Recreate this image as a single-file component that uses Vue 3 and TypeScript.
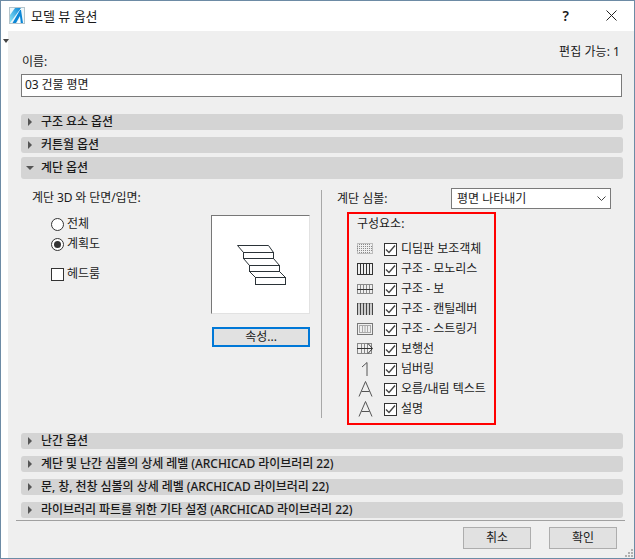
<script setup lang="ts">
const sectionsBottom: string[] = [
  '난간 옵션',
  '계단 및 난간 심볼의 상세 레벨 (ARCHICAD 라이브러리 22)',
  '문, 창, 천창 심볼의 상세 레벨 (ARCHICAD 라이브러리 22)',
  '라이브러리 파트를 위한 기타 설정 (ARCHICAD 라이브러리 22)',
]
const components: { icon: string; label: string }[] = [
  { icon: 'dim', label: '디딤판 보조객체' },
  { icon: 'mono', label: '구조 - 모노리스' },
  { icon: 'beam', label: '구조 - 보' },
  { icon: 'cant', label: '구조 - 캔틸레버' },
  { icon: 'str', label: '구조 - 스트링거' },
  { icon: 'walk', label: '보행선' },
  { icon: 'num', label: '넘버링' },
  { icon: 'a', label: '오름/내림 텍스트' },
  { icon: 'a', label: '설명' },
]
const bars = (n: number, x0: number, dx: number): number[] =>
  Array.from({ length: n }, (_, i) => x0 + i * dx)
</script>

<template>
  <div class="window">
    <header class="titlebar">
      <svg class="logo" width="16" height="18" viewBox="0 0 16 18">
        <defs>
          <linearGradient id="lg" x1="0" y1="1" x2="1" y2="0">
            <stop offset="0" stop-color="#8fe6f6" />
            <stop offset="1" stop-color="#0a86d6" />
          </linearGradient>
        </defs>
        <rect x="0.5" y="0.5" width="15" height="16" fill="#eef7fa" stroke="#b5c5cc" />
        <path d="M1 16 V8 L6 1 H12 Z" fill="url(#lg)" />
        <path d="M3.5 16 L11 3 L12 3 L14 16 H11.5 L11 9 L7 16 Z" fill="#0a86d6" />
        <path d="M8.5 16 L11 10 L11.5 16 Z" fill="#fff" />
      </svg>
      <span class="title">모델 뷰 옵션</span>
      <span class="help">?</span>
      <svg class="close" width="11" height="11" viewBox="0 0 11 11">
        <path d="M0.5 0.5 L10.5 10.5 M10.5 0.5 L0.5 10.5" stroke="#222" fill="none" />
      </svg>
    </header>

    <main class="body">
      <i class="corner-arrow"></i>
      <div class="edit-count">편집 가능: 1</div>
      <label class="name-label">이름:</label>
      <div class="name-input">03 건물 평면</div>

      <div class="section sec-first"><i class="tri-right"></i><span>구조 요소 옵션</span></div>
      <div class="section sec-second"><i class="tri-right"></i><span>커튼월 옵션</span></div>
      <div class="section sec-open"><i class="tri-down"></i><span>계단 옵션</span></div>

      <div class="panel">
        <div class="left">
          <div class="group-label">계단 3D 와 단면/입면:</div>
          <div class="left-row">
            <div class="options">
              <div class="opt"><i class="radio"></i><span>전체</span></div>
              <div class="opt opt-2"><i class="radio on"></i><span>계획도</span></div>
              <div class="opt opt-3"><i class="box"></i><span>헤드룸</span></div>
            </div>
            <div class="preview-col">
              <div class="preview">
                <svg width="97" height="97" viewBox="1 1 97 97">
                  <g fill="none" stroke="#2b3338" stroke-width="1">
                    <path d="M26.5 30.5 H57.5 L62.5 37.5 M26.5 30.5 L32.5 37.5" />
                    <rect x="32.5" y="37.5" width="30" height="6" />
                    <path d="M32.5 43.5 L38.5 50.5 M62.5 43.5 L68.5 50.5" />
                    <rect x="38.5" y="50.5" width="30" height="6" />
                    <path d="M38.5 56.5 L44.5 62.5 M68.5 56.5 L74.5 62.5" />
                    <rect x="44.5" y="62.5" width="30" height="7" />
                  </g>
                </svg>
              </div>
              <button class="attr-btn">속성...</button>
            </div>
          </div>
        </div>

        <div class="vdivider"></div>

        <div class="right">
          <div class="symbol-row">
            <span class="symbol-label">계단 심볼:</span>
            <div class="select">
              <span>평면 나타내기</span>
              <svg width="9" height="5" viewBox="0 0 9 5"><path d="M0.5 0.5 L4.5 4.5 L8.5 0.5" fill="none" stroke="#444" /></svg>
            </div>
          </div>
          <div class="red-box">
            <div class="comp-title">구성요소:</div>
            <div v-for="c in components" :key="c.label" class="comp-row">
              <svg class="comp-icon" width="16" height="16" viewBox="0 0 16 16">
                <g v-if="c.icon === 'dim'" stroke="#8a8a8a" fill="none" stroke-dasharray="1 1">
                  <rect x="0.5" y="2.5" width="15" height="10" />
                  <path v-for="x in bars(6, 2.5, 2)" :key="x" :d="`M${x} 3 V13`" />
                  <path d="M0 5.5 H16 M0 7.5 H16 M0 9.5 H16" />
                </g>
                <g v-else-if="c.icon === 'mono'" stroke="#333" fill="none">
                  <rect x="0.5" y="2.5" width="15" height="11" />
                  <path v-for="x in bars(4, 3.5, 3)" :key="x" :d="`M${x} 2.5 V13.5`" />
                </g>
                <g v-else-if="c.icon === 'beam'" stroke="#8a8a8a" fill="none">
                  <rect x="0.5" y="3.5" width="15" height="9" />
                  <path v-for="x in bars(4, 3.5, 3)" :key="x" :d="`M${x} 3.5 V12.5`" />
                  <path d="M0 8.5 H16" stroke="#333" />
                </g>
                <g v-else-if="c.icon === 'cant'" fill="none">
                  <path d="M0 2.5 H16" stroke="#999" />
                  <path v-for="x in bars(6, 0.5, 3)" :key="x" :d="`M${x} 2 V14`" stroke="#444" />
                  <path d="M2 3 V14 M5 3 V14 M8 3 V14 M11 3 V14 M14 3 V14" stroke="#aaa" />
                </g>
                <g v-else-if="c.icon === 'str'" fill="none">
                  <rect x="2.5" y="4.5" width="11" height="7" stroke="#aaa" />
                  <path v-for="x in bars(3, 5.5, 2.5)" :key="x" :d="`M${x} 4.5 V11.5`" stroke="#aaa" />
                  <path d="M0 2.5 H16 M0 13.5 H16 M0.5 2 V14 M15.5 2 V14" stroke="#777" />
                </g>
                <g v-else-if="c.icon === 'walk'" fill="none" stroke="#888">
                  <rect x="0.5" y="2.5" width="14" height="10" />
                  <path d="M4.5 2.5 V12.5 M7.5 2.5 V12.5 M10.5 2.5 V12.5" />
                  <path d="M0 7.5 H15 M11 2.5 L15.5 7.5 L11 12.5" stroke="#333" />
                </g>
                <path v-else-if="c.icon === 'num'" d="M5 6 L10 1.5 V15" fill="none" stroke="#555" />
                <path v-else d="M2 15.5 L8.5 0.5 L15 15.5 M4.5 10.5 H12.5" fill="none" stroke="#555" />
              </svg>
              <i class="box checked">
                <svg width="11" height="11" viewBox="0 0 11 11"><path d="M1 5.5 L4 8.5 L10 1.5" fill="none" stroke="#444" stroke-width="1.4" /></svg>
              </i>
              <span class="comp-label">{{ c.label }}</span>
            </div>
          </div>
        </div>
      </div>

      <div v-for="s in sectionsBottom" :key="s" class="section sec-bottom"><i class="tri-right"></i><span>{{ s }}</span></div>
    </main>

    <footer class="footer">
      <div class="sep"></div>
      <div class="btn-row">
        <button class="btn">취소</button>
        <button class="btn">확인</button>
      </div>
      <svg class="grip" width="9" height="9" viewBox="0 0 9 9" fill="#b0b0b0">
        <rect x="6" y="0" width="2" height="2" /><rect x="3" y="3" width="2" height="2" /><rect x="6" y="3" width="2" height="2" />
        <rect x="0" y="6" width="2" height="2" /><rect x="3" y="6" width="2" height="2" /><rect x="6" y="6" width="2" height="2" />
      </svg>
    </footer>
  </div>
</template>

<style>
html, body { margin: 0; padding: 0; background: #efefef; }
</style>

<style scoped>
.window {
  position: relative;
  width: 635px;
  height: 559px;
  box-sizing: border-box;
  border: 1px solid #6d8ba5;
  background: #fff;
  display: flex;
  flex-direction: column;
  font-family: "Noto Sans", "Noto Sans CJK KR", sans-serif;
  font-size: 12px;
  line-height: 16px;
  color: #1a1a1a;
  overflow: hidden;
}
.titlebar {
  height: 30px;
  flex: none;
  display: flex;
  align-items: center;
  padding: 0 0 1px 8px;
  box-sizing: border-box;
  background: #fff;
}
.logo { flex: none; }
.title { margin-left: 6px; font-size: 13px; }
.help { margin-left: auto; margin-right: 1px; font-size: 14px; font-weight: 600; }
.close { margin-left: 36px; margin-right: 17px; }

.body {
  position: relative;
  margin-left: 7px;
  flex: 1;
  min-height: 0;
  background: #efefef;
  padding: 0 13px;
  display: flex;
  flex-direction: column;
}
.corner-arrow {
  position: absolute;
  left: -5px;
  top: 8px;
  border-left: 3.5px solid transparent;
  border-right: 3.5px solid transparent;
  border-top: 4px solid #444;
}
.edit-count { text-align: right; height: 16px; margin-top: 13px; padding-right: 1px; letter-spacing: 0.05px; }
.name-label { margin: -6px 0 0 1px; height: 16px; display: block; }
.name-input {
  box-sizing: border-box;
  height: 23px;
  margin-top: 4px;
  width: 601px;
  border: 1px solid #7a7a7a;
  background: #fff;
  padding: 2px 3px;
  letter-spacing: -0.1px;
}
.section {
  box-sizing: border-box;
  width: 602px;
  height: 16px;
  background: #d4d4d4;
  border-radius: 3px;
  display: flex;
  align-items: center;
  padding-left: 7px;
  font-weight: 500;
  font-size: 12px;
  letter-spacing: -0.05px;
  white-space: nowrap;
  flex: none;
}
.section span { margin-left: 9px; }
.sec-first { margin-top: 17px; }
.sec-second { margin-top: 7px; }
.sec-open { margin-top: 4px; height: 22px; }
.sec-bottom { margin-top: 7px; }
.panel + .sec-bottom { margin-top: 0; }
.tri-right {
  flex: none;
  width: 0; height: 0;
  border-top: 4px solid transparent;
  border-bottom: 4px solid transparent;
  border-left: 4px solid #555;
}
.tri-down {
  flex: none;
  width: 0; height: 0;
  margin-left: -2px;
  margin-right: -2px;
  border-left: 4px solid transparent;
  border-right: 4px solid transparent;
  border-top: 4px solid #555;
}
.panel {
  height: 254px;
  flex: none;
  display: flex;
}
.left { width: 299px; padding: 11px 0 0 11px; box-sizing: border-box; flex: none; }
.group-label { height: 16px; letter-spacing: -0.1px; }
.left-row { display: flex; }
.options { width: 179px; flex: none; padding: 11px 0 0 19px; box-sizing: border-box; }
.opt { display: flex; align-items: center; height: 14px; gap: 3px; }
.opt-2 { margin-top: 6px; }
.opt-3 { margin-top: 16px; }
.radio {
  box-sizing: border-box;
  width: 13px; height: 13px;
  border: 1px solid #333;
  border-radius: 50%;
  background: #fff;
  flex: none;
  position: relative;
}
.radio.on::after {
  content: "";
  position: absolute;
  left: 2px; top: 2px;
  width: 7px; height: 7px;
  border-radius: 50%;
  background: #333;
}
.box {
  box-sizing: border-box;
  width: 13px; height: 13px;
  border: 1px solid #333;
  background: #fff;
  flex: none;
  display: inline-flex;
  align-items: center;
  justify-content: center;
}
.preview-col { width: 99px; flex: none; padding-top: 9px; }
.preview {
  box-sizing: border-box;
  width: 99px; height: 99px;
  background: #fff;
  border: 1px solid;
  border-color: #777 #e2e2e2 #e2e2e2 #777;
}
.preview svg { display: block; }
.attr-btn {
  box-sizing: border-box;
  display: block;
  width: 98px;
  height: 20px;
  margin: 13px 0 0 1px;
  border: 2px solid #0078d7;
  background: #e1e1e1;
  font: inherit;
  padding: 0;
  color: #1a1a1a;
}
.vdivider { width: 1px; height: 228px; margin: 11px 0 0 1px; background: #a8a8a8; flex: none; }
.right { padding: 9px 0 0 15px; flex: none; width: 295px; box-sizing: border-box; }
.symbol-row { display: flex; align-items: center; height: 21px; }
.symbol-label { width: 114px; flex: none; }
.select {
  box-sizing: border-box;
  width: 160px;
  height: 21px;
  flex: none;
  border: 1px solid #7a7a7a;
  background: #fff;
  display: flex;
  align-items: center;
  justify-content: space-between;
  padding: 0 4px 0 5px;
}
.red-box {
  box-sizing: border-box;
  width: 149px;
  height: 213px;
  margin: 3px 0 0 10px;
  border: 2px solid #f00;
  padding: 2px 0 0 8px;
}
.comp-title { height: 16px; margin: 0 0 7px 0; }
.comp-row { display: flex; align-items: center; height: 20px; }
.comp-icon { flex: none; }
.comp-row .box { margin-left: 11px; }
.comp-row .box.checked svg { display: block; }
.comp-label { margin-left: 4px; white-space: nowrap; }

.footer {
  position: relative;
  margin-left: 7px;
  height: 38px;
  flex: none;
  background: #efefef;
  box-sizing: border-box;
  display: flex;
  flex-direction: column;
}
.sep { height: 1px; margin: 0 9px 0 8px; background: #a0a0a0; flex: none; }
.btn-row {
  display: flex;
  justify-content: flex-end;
  gap: 18px;
  padding: 6px 17px 0 0;
}
.btn {
  box-sizing: border-box;
  width: 68px;
  height: 22px;
  border: 1px solid #adadad;
  background: #e1e1e1;
  font: inherit;
  padding: 0;
  color: #1a1a1a;
}
.grip { position: absolute; right: 0; bottom: 0; }
</style>
